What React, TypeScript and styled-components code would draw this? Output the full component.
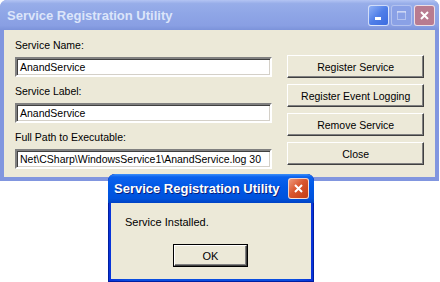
import React from "react";
import styled, { createGlobalStyle } from "styled-components";

const GlobalStyle = createGlobalStyle`
  html, body {
    margin: 0;
    padding: 0;
    background: #ffffff;
  }
  body {
    font-family: "Liberation Sans", Arial, sans-serif;
  }
`;

const Desktop = styled.div`
  position: relative;
  width: 440px;
  height: 282px;
  overflow: hidden;
  background: #ffffff;
`;

// ---- window chrome ----

const Frame = styled.div<{ $active?: boolean }>`
  display: flex;
  flex-direction: column;
  box-sizing: border-box;
  border-radius: 7px 7px 0 0;
  padding: 0 ${(p) => (p.$active ? "3px 3px" : "4px 4px")} ;
  background: ${(p) =>
    p.$active
      ? "linear-gradient(to right, #0831d9, #0a4ee0 10%, #0a4ee0 90%, #0831d9)"
      : "#8196df"};
`;

const MainWindow = styled(Frame)`
  width: 439px;
  height: 181px;
`;

const DialogWindow = styled(Frame)`
  position: absolute;
  left: 108px;
  top: 174px;
  width: 206px;
  height: 108px;
  box-shadow: 0 0 0 1px #001ea0 inset;
`;

const TitleBar = styled.div<{ $active?: boolean }>`
  display: flex;
  align-items: center;
  flex: none;
  height: ${(p) => (p.$active ? "29px" : "30px")};
  margin: 0 ${(p) => (p.$active ? "-3px" : "-4px")};
  padding: 0 ${(p) => (p.$active ? "5px 0 6px" : "4px 0 7px")};
  box-sizing: border-box;
  border-radius: 7px 7px 0 0;
  background: ${(p) =>
    p.$active
      ? "linear-gradient(to bottom, #3d8ff8 0%, #0a62ee 10%, #0058e6 45%, #0052dc 85%, #0042c4 100%)"
      : "linear-gradient(to bottom, #b3c4f3 0%, #97ade9 12%, #8ea5e6 50%, #899fe3 85%, #7c93da 100%)"};
`;

const TitleText = styled.span<{ $active?: boolean }>`
  flex: 1;
  font-family: "Liberation Sans", Arial, sans-serif;
  font-weight: bold;
  font-size: 13px;
  letter-spacing: 0;
  color: ${(p) => (p.$active ? "#ffffff" : "#dce5fa")};
  text-shadow: ${(p) => (p.$active ? "1px 1px 0 #0a1e7a" : "none")};
  white-space: nowrap;
`;

const CaptionButtons = styled.div`
  display: flex;
  gap: 2px;
`;

const CaptionButton = styled.span<{ $kind: "min" | "max" | "close"; $active?: boolean }>`
  display: flex;
  align-items: center;
  justify-content: center;
  width: 21px;
  height: 21px;
  box-sizing: border-box;
  border-radius: 3px;
  border: 1px solid
    ${(p) => (p.$kind === "max" ? "rgba(255,255,255,0.35)" : "rgba(255,255,255,0.75)")};
  background: ${(p) =>
    p.$kind === "close"
      ? p.$active
        ? "linear-gradient(to bottom right, #ee9a7c, #d9562f 45%, #c23c14)"
        : "#b87b90"
      : p.$kind === "min"
      ? "linear-gradient(to bottom right, #8fb0f5, #4f7ee8 50%, #3c6ce0)"
      : "#8aa1e6"};
`;

// ---- client area ----

const Client = styled.div`
  flex: 1;
  display: flex;
  gap: 15px;
  padding: 9px 11px 0 11px;
  background: #ece9d8;
  font-size: 10.5px;
  color: #000;
`;

const FieldColumn = styled.div`
  display: flex;
  flex-direction: column;
  width: 258px;
`;

const FieldLabel = styled.label`
  height: 13px;
  line-height: 13px;
  margin-bottom: 5px;
  white-space: nowrap;
`;

const TextBox = styled.div`
  height: 20px;
  box-sizing: border-box;
  margin-bottom: 8px;
  padding: 0 0 0 3px;
  display: flex;
  align-items: center;
  background: #ffffff;
  border-style: solid;
  border-width: 2px;
  border-color: #808080 #ffffff #ffffff #808080;
  box-shadow: inset 1px 1px 0 #404040, inset -1px -1px 0 #d4d0c8;
  font-size: 10.5px;
  white-space: nowrap;
  overflow: hidden;
`;

const ButtonColumn = styled.div`
  display: flex;
  flex-direction: column;
  gap: 6px;
  margin-top: 16px;
  width: 137px;
`;

const ClassicButton = styled.button<{ $default?: boolean }>`
  height: 23px;
  width: 100%;
  box-sizing: border-box;
  padding: 0;
  background: #ece9d8;
  border-style: solid;
  border-width: 1px;
  border-color: #ffffff #404040 #404040 #ffffff;
  box-shadow: inset -1px -1px 0 #808080;
  font-family: "Liberation Sans", Arial, sans-serif;
  font-size: 10.5px;
  color: #000;
  outline: ${(p) => (p.$default ? "1px solid #000" : "none")};
`;

// ---- message box ----

const MessageBody = styled.div`
  flex: 1;
  display: flex;
  flex-direction: column;
  align-items: center;
  padding: 13px 0 0;
  background: #ece9d8;
`;

const MessageText = styled.div`
  align-self: flex-start;
  padding-left: 14px;
  height: 13px;
  line-height: 13px;
  font-size: 11px;
  margin-bottom: 16px;
`;

const OkButton = styled(ClassicButton)`
  width: 73px;
  height: 21px;
  margin-left: -1px;
  font-size: 11px;
`;

function Glyph({ kind, dim }: { kind: "min" | "max" | "close"; dim?: boolean }) {
  const c = dim ? "rgba(255,255,255,0.35)" : "#ffffff";
  if (kind === "min")
    return (
      <svg width="13" height="13" viewBox="0 0 13 13">
        <rect x="3" y="8" width="6" height="3" fill={c} />
      </svg>
    );
  if (kind === "max")
    return (
      <svg width="13" height="13" viewBox="0 0 13 13">
        <rect x="2.5" y="2.5" width="8" height="8" fill="none" stroke={c} />
        <rect x="2" y="2" width="9" height="2" fill={c} />
      </svg>
    );
  return (
    <svg width="13" height="13" viewBox="0 0 13 13">
      <path d="M3 3 L10 10 M10 3 L3 10" stroke={c} strokeWidth="2" />
    </svg>
  );
}

const fields = [
  { label: "Service Name:", value: "AnandService" },
  { label: "Service Label:", value: "AnandService" },
  {
    label: "Full Path to Executable:",
    value: "Net\\CSharp\\WindowsService1\\AnandService.log 30",
  },
];

const actions = ["Register Service", "Register Event Logging", "Remove Service", "Close"];

export default function App() {
  return (
    <>
      <GlobalStyle />
      <Desktop>
        <MainWindow>
          <TitleBar>
            <TitleText>Service Registration Utility</TitleText>
            <CaptionButtons>
              <CaptionButton $kind="min">
                <Glyph kind="min" />
              </CaptionButton>
              <CaptionButton $kind="max">
                <Glyph kind="max" dim />
              </CaptionButton>
              <CaptionButton $kind="close">
                <Glyph kind="close" />
              </CaptionButton>
            </CaptionButtons>
          </TitleBar>
          <Client>
            <FieldColumn>
              {fields.map((f) => (
                <React.Fragment key={f.label}>
                  <FieldLabel>{f.label}</FieldLabel>
                  <TextBox>{f.value}</TextBox>
                </React.Fragment>
              ))}
            </FieldColumn>
            <ButtonColumn>
              {actions.map((a) => (
                <ClassicButton key={a}>{a}</ClassicButton>
              ))}
            </ButtonColumn>
          </Client>
        </MainWindow>

        <DialogWindow $active>
          <TitleBar $active>
            <TitleText $active>Service Registration Utility</TitleText>
            <CaptionButton $kind="close" $active>
              <Glyph kind="close" />
            </CaptionButton>
          </TitleBar>
          <MessageBody>
            <MessageText>Service Installed.</MessageText>
            <OkButton $default>OK</OkButton>
          </MessageBody>
        </DialogWindow>
      </Desktop>
    </>
  );
}
